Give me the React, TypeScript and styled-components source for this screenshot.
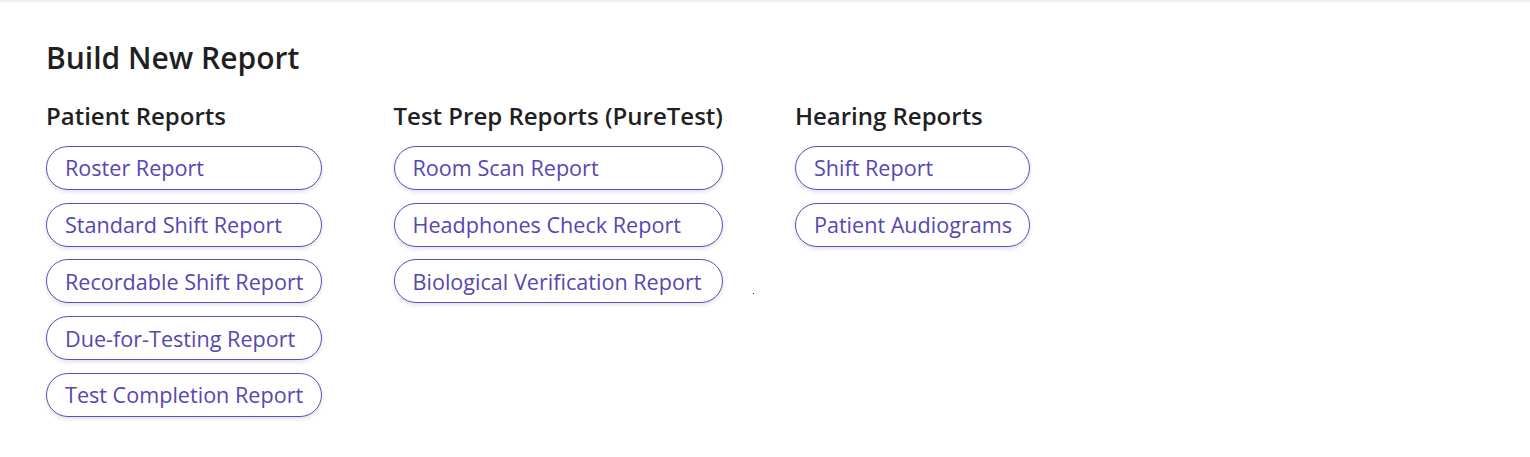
import React from "react";
import styled, { createGlobalStyle } from "styled-components";

const Global = createGlobalStyle`
  html, body { margin: 0; padding: 0; background: #ffffff; }
  body { font-family: "Open Sans", "Noto Sans", sans-serif; color: #1f1f24; }
  * { box-sizing: border-box; }
`;

const Page = styled.div`
  border-top: 2px solid #efefef;
  padding: 36px 46px 40px;
`;

const Title = styled.h1`
  margin: 0 0 22px;
  font-size: 30px;
  line-height: 40px;
  font-weight: 600;
  color: #1f1f24;
`;

const Columns = styled.div`
  display: flex;
  align-items: flex-start;
  gap: 72px;
`;

const Column = styled.section`
  position: relative;
  display: flex;
  flex-direction: column;
  gap: 12.75px;
`;

const Heading = styled.h2`
  margin: 0 0 1px;
  font-size: 24px;
  line-height: 32px;
  font-weight: 600;
  color: #1f1f24;
  white-space: nowrap;
`;

const ReportButton = styled.button`
  display: block;
  width: 100%;
  height: 44px;
  padding: 0 17px 0 18px;
  text-align: left;
  font-family: inherit;
  font-size: 21.6px;
  font-weight: 400;
  color: #5747b0;
  background: #ffffff;
  border: 1px solid #5a4ec4;
  border-radius: 22px;
  box-shadow: 0 2px 4px rgba(0, 0, 0, 0.12);
  white-space: nowrap;
  cursor: pointer;
`;

const Stray = styled.span`
  position: absolute;
  right: -31px;
  bottom: 9px;
  width: 1px;
  height: 1px;
  background: #222;
`;

const groups = [
  {
    title: "Patient Reports",
    items: [
      "Roster Report",
      "Standard Shift Report",
      "Recordable Shift Report",
      "Due-for-Testing Report",
      "Test Completion Report",
    ],
  },
  {
    title: "Test Prep Reports (PureTest)",
    items: ["Room Scan Report", "Headphones Check Report", "Biological Verification Report"],
    stray: true,
  },
  {
    title: "Hearing Reports",
    items: ["Shift Report", "Patient Audiograms"],
  },
];

export default function App() {
  return (
    <>
      <Global />
      <Page>
        <Title>Build New Report</Title>
        <Columns>
          {groups.map((g) => (
            <Column key={g.title}>
              <Heading>{g.title}</Heading>
              {g.items.map((it) => (
                <ReportButton key={it}>{it}</ReportButton>
              ))}
              {g.stray && <Stray />}
            </Column>
          ))}
        </Columns>
      </Page>
    </>
  );
}
